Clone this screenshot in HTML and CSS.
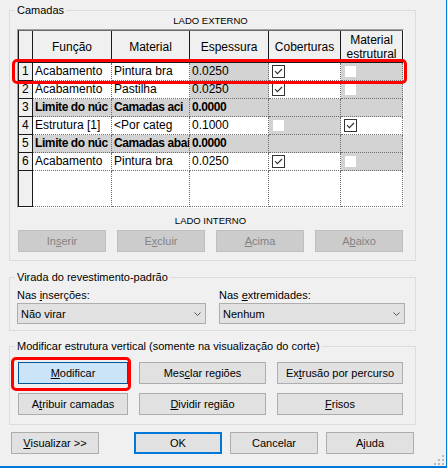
FILE: index.html
```html
<!DOCTYPE html>
<html lang="pt">
<head>
<meta charset="utf-8">
<title>Camadas</title>
<link rel="stylesheet" href="styles.css">
</head>
<body>
<div class="dialog">
  <fieldset class="grp grp-layers">
    <legend>Camadas</legend>
    <div class="side side-out">LADO EXTERNO</div>
    <div class="grid-frame">
      <div class="grid">
        <div class="hd"></div>
        <div class="hd">Função</div>
        <div class="hd">Material</div>
        <div class="hd">Espessura</div>
        <div class="hd">Coberturas</div>
        <div class="hd">Material<br>estrutural</div>

        <div class="num">1</div>
        <div class="cell">Acabamento</div>
        <div class="cell">Pintura bra</div>
        <div class="cell g">0.0250</div>
        <div class="cell ck"><span class="cb on"><svg viewBox="0 0 11 11" width="11" height="11"><path d="M2 5.2 L4.4 7.6 L9 3" /></svg></span></div>
        <div class="cell g ck"><span class="cb off"></span></div>

        <div class="num">2</div>
        <div class="cell">Acabamento</div>
        <div class="cell">Pastilha</div>
        <div class="cell g">0.0250</div>
        <div class="cell ck"><span class="cb on"><svg viewBox="0 0 11 11" width="11" height="11"><path d="M2 5.2 L4.4 7.6 L9 3" /></svg></span></div>
        <div class="cell g ck"><span class="cb off"></span></div>

        <div class="num">3</div>
        <div class="cell g b">Limite do núc</div>
        <div class="cell g b">Camadas aci</div>
        <div class="cell g b">0.0000</div>
        <div class="cell g"></div>
        <div class="cell g"></div>

        <div class="num">4</div>
        <div class="cell">Estrutura [1]</div>
        <div class="cell">&lt;Por categ</div>
        <div class="cell">0.1000</div>
        <div class="cell g ck"><span class="cb off"></span></div>
        <div class="cell ck"><span class="cb on"><svg viewBox="0 0 11 11" width="11" height="11"><path d="M2 5.2 L4.4 7.6 L9 3" /></svg></span></div>

        <div class="num">5</div>
        <div class="cell g b">Limite do núc</div>
        <div class="cell g b">Camadas abai</div>
        <div class="cell g b">0.0000</div>
        <div class="cell g"></div>
        <div class="cell g"></div>

        <div class="num">6</div>
        <div class="cell">Acabamento</div>
        <div class="cell">Pintura bra</div>
        <div class="cell">0.0250</div>
        <div class="cell ck"><span class="cb on"><svg viewBox="0 0 11 11" width="11" height="11"><path d="M2 5.2 L4.4 7.6 L9 3" /></svg></span></div>
        <div class="cell g ck"><span class="cb off"></span></div>

        <div class="num"></div>
        <div class="cell"></div>
        <div class="cell"></div>
        <div class="cell"></div>
        <div class="cell"></div>
        <div class="cell"></div>
      </div>
    </div>
    <div class="side side-in">LADO INTERNO</div>
    <div class="btn-row">
      <button class="btn" disabled>In<u>s</u>erir</button>
      <button class="btn" disabled>E<u>x</u>cluir</button>
      <button class="btn" disabled><u>A</u>cima</button>
      <button class="btn" disabled>A<u>b</u>aixo</button>
    </div>
  </fieldset>

  <fieldset class="grp grp-wrap">
    <legend>Virada do revestimento-padrão</legend>
    <div class="wrap-cols">
      <div class="field">
        <div class="lbl">Nas <u>i</u>nserções:</div>
        <div class="combo"><span>Não virar</span><svg width="7" height="4" viewBox="0 0 7 4"><polyline points="0.5,0.5 3.5,3.5 6.5,0.5"/></svg></div>
      </div>
      <div class="field">
        <div class="lbl">Nas <u>e</u>xtremidades:</div>
        <div class="combo"><span>Nenhum</span><svg width="7" height="4" viewBox="0 0 7 4"><polyline points="0.5,0.5 3.5,3.5 6.5,0.5"/></svg></div>
      </div>
    </div>
  </fieldset>

  <fieldset class="grp grp-mod">
    <legend>Modificar estrutura vertical (somente na visualização do corte)</legend>
    <div class="mod-grid">
      <button class="btn focus"><u>M</u>odificar</button>
      <button class="btn">Mes<u>c</u>lar regiões</button>
      <button class="btn">Ex<u>t</u>rusão por percurso</button>
      <button class="btn">A<u>t</u>ribuir camadas</button>
      <button class="btn"><u>D</u>ividir região</button>
      <button class="btn"><u>F</u>risos</button>
    </div>
  </fieldset>

  <div class="footer">
    <button class="btn"><u>V</u>isualizar &gt;&gt;</button>
    <div class="footer-right">
      <button class="btn default">OK</button>
      <button class="btn">Cancelar</button>
      <button class="btn">A<u>j</u>uda</button>
    </div>
  </div>

  <div class="hl hl-row"></div>
  <div class="hl hl-mod"></div>
  <svg class="grip" width="11" height="11" viewBox="0 0 11 11">
    <rect x="8" y="0" width="2" height="2"/>
    <rect x="4" y="4" width="2" height="2"/>
    <rect x="8" y="4" width="2" height="2"/>
    <rect x="0" y="8" width="2" height="2"/>
    <rect x="4" y="8" width="2" height="2"/>
    <rect x="8" y="8" width="2" height="2"/>
  </svg>
</div>
</body>
</html>
```

FILE: styles.css
```css
* { box-sizing: border-box; }

html, body {
  margin: 0;
  padding: 0;
  background: #f0f0f0;
}

body {
  font-family: "Liberation Sans", Arial, sans-serif;
  font-size: 11px;
  color: #000;
}

.dialog {
  position: relative;
  width: 447px;
  height: 468px;
  padding: 3px 0 0 9px;
  background: #f0f0f0;
  border-right: 1px solid #0078d7;
  border-bottom: 2px solid #0078d7;
  overflow: hidden;
}

u { text-decoration: underline; text-underline-offset: 1px; }

/* group boxes */
.grp {
  width: 407px;
  margin: 0;
  padding: 0 10px 0 7px;
  border: 1px solid #dcdcdc;
  min-width: 0;
}

.grp legend {
  padding: 0 2px;
  margin-left: -2px;
  line-height: 14px;
  font-size: 11px;
}

.grp-layers { padding-bottom: 8px; }
.grp-wrap { margin-top: 9px; padding-top: 4px; padding-bottom: 6px; }
.grp-mod { margin-top: 8px; padding-top: 9px; padding-bottom: 9px; }

.side {
  font-size: 9.5px;
  line-height: 11px;
  text-align: center;
  width: 387px;
}
.side-out { margin-top: -2px; }
.side-in { margin-top: 7px; }

/* grid */
.grid-frame {
  width: 387px;
  margin-top: 3px;
  border: 1px solid;
  border-color: #a0a0a0 #ffffff #ffffff #a0a0a0;
  background: #fff;
}

.grid {
  display: grid;
  grid-template-columns: 14px 79px 78px 79px 72px 62px;
  grid-template-rows: 32px repeat(6, 18px) 36px;
  border-top: 1px solid #6a6a6a;
  border-left: 1px solid #1a1a1a;
  font-size: 12px;
}

.hd {
  background: #f0f0f0;
  border-right: 1px solid #1a1a1a;
  border-bottom: 1px solid #1a1a1a;
  display: flex;
  align-items: center;
  justify-content: center;
  text-align: center;
  line-height: 14px;
  padding-top: 1px;
}

.num {
  background: #f0f0f0;
  border-right: 1px solid #1a1a1a;
  border-bottom: 1px solid #1a1a1a;
  line-height: 17px;
  padding-left: 3px;
}

.cell {
  background: #fff;
  border-right: 1px dotted #6e6e6e;
  border-bottom: 1px dotted #6e6e6e;
  line-height: 17px;
  padding-left: 2px;
  white-space: nowrap;
  overflow: hidden;
}

.cell.g { background: #d3d3d3; }
.cell.b { font-weight: bold; letter-spacing: -0.4px; }

.cell.ck {
  display: flex;
  align-items: center;
  padding-left: 3px;
}

.cb {
  display: block;
  width: 13px;
  height: 13px;
  background: #fff;
}
.cb.on { border: 1px solid #333; }
.cb.on svg { display: block; }
.cb.on path { fill: none; stroke: #333; stroke-width: 1.2; }
.cb.off { border: 1px solid transparent; background-clip: padding-box; }

/* buttons */
.btn {
  font-family: inherit;
  font-size: 11px;
  color: #000;
  background: #e1e1e1;
  border: 1px solid #adadad;
  border-radius: 0;
  height: 22px;
  padding: 0;
  margin: 0;
  text-align: center;
  line-height: 19px;
  white-space: nowrap;
}

.btn:disabled {
  background: #cccccc;
  border-color: #bfbfbf;
  color: #838383;
}

.btn.focus {
  background: #cce4f7;
  border-color: #005499;
}

.btn.default {
  border: 2px solid #0078d7;
  line-height: 17px;
}

.btn-row {
  display: flex;
  justify-content: space-between;
  margin: 4px 1px 0 1px;
  width: 385px;
}
.btn-row .btn { width: 88px; }

/* wrap group */
.wrap-cols {
  display: grid;
  grid-template-columns: 189px 186px;
  column-gap: 13px;
}

.lbl {
  line-height: 14px;
}

.combo {
  margin-top: 1px;
  height: 21px;
  background: #e1e1e1;
  border: 1px solid #adadad;
  display: flex;
  align-items: center;
  justify-content: space-between;
  padding: 0 4px 0 3px;
}
.combo svg polyline { fill: none; stroke: #555; stroke-width: 1; }

/* modify group */
.mod-grid {
  display: grid;
  grid-template-columns: 110px 127px 126px;
  grid-auto-rows: 22px;
  column-gap: 11px;
  row-gap: 9px;
  margin-left: 1px;
}

/* footer */
.footer {
  display: flex;
  margin-top: 7px;
  margin-left: 2px;
}
.footer .btn { width: 88px; }
.footer-right {
  display: flex;
  gap: 8px;
  margin-left: 35px;
}

/* overlays */
.hl {
  position: absolute;
  border: 3px solid #ff0000;
  border-radius: 5px;
}
.hl-row { left: 12px; top: 59px; width: 395px; height: 25px; }
.hl-mod { left: 11px; top: 357px; width: 120px; height: 34px; }

.grip {
  position: absolute;
  left: 434px;
  top: 455px;
  fill: #b8b8b8;
}
```
